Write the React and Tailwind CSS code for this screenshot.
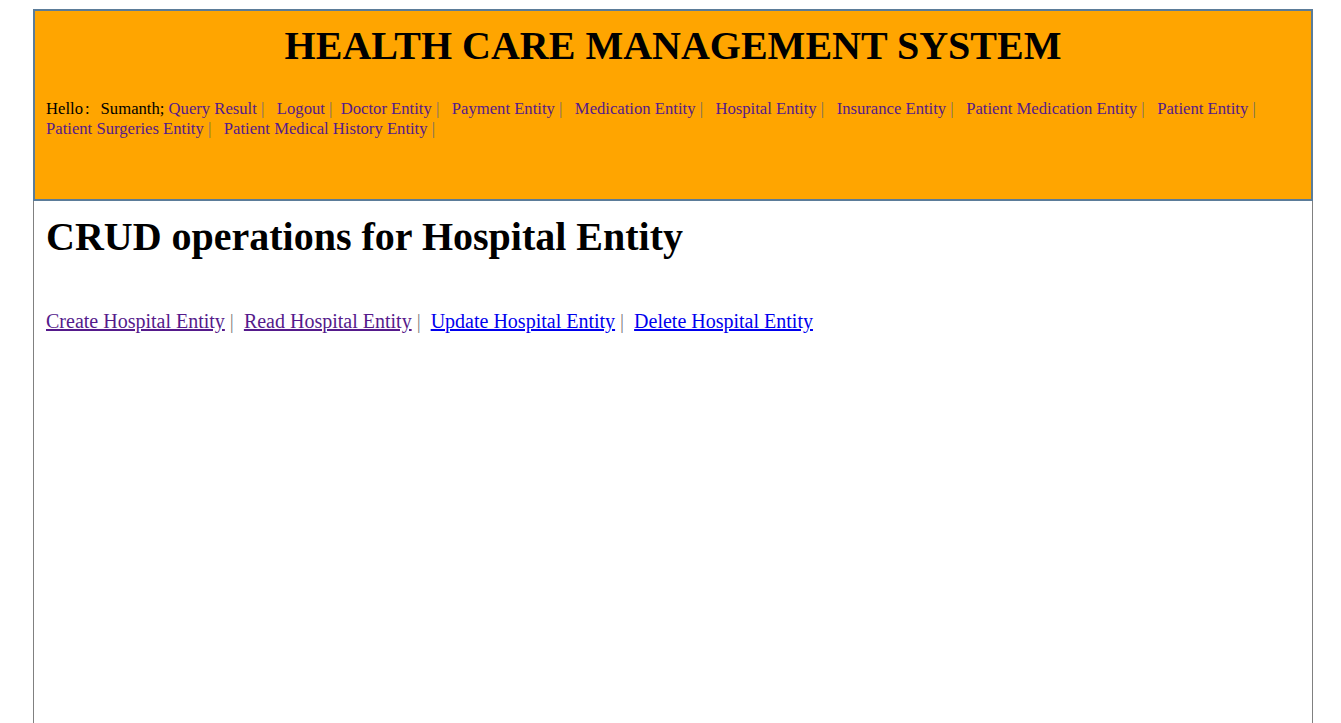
import React from 'react';

const navLinks = [
    { label: 'Query Result', gap: '\u00a0\u00a0 ' },
    { label: 'Logout', gap: '\u00a0 ' },
    { label: 'Doctor Entity', gap: '\u00a0\u00a0 ' },
    { label: 'Payment Entity', gap: '\u00a0\u00a0 ' },
    { label: 'Medication Entity', gap: '\u00a0\u00a0 ' },
    { label: 'Hospital Entity', gap: '\u00a0\u00a0 ' },
    { label: 'Insurance Entity', gap: '\u00a0\u00a0 ' },
    { label: 'Patient Medication Entity', gap: '\u00a0\u00a0 ' },
    { label: 'Patient Entity', gap: '\u00a0\u00a0 ' },
    { label: 'Patient Surgeries Entity', gap: '\u00a0\u00a0 ' },
    { label: 'Patient Medical History Entity', gap: '' },
];

const crudLinks = [
    { label: 'Create Hospital Entity', visited: true },
    { label: 'Read Hospital Entity', visited: true },
    { label: 'Update Hospital Entity', visited: false },
    { label: 'Delete Hospital Entity', visited: false },
];

const App = () => (
    <div className="min-h-screen bg-white pt-[9px] font-['Liberation_Serif','Times_New_Roman',serif] text-black">
        <div className="ml-[33px] w-[1280px] min-h-[714px] border-x border-[#808080]">
            <div className="-mx-px h-[192px] border-2 border-[#5b7c99] bg-[#ffa500] px-[11px]">
                <h1 className="mt-[12px] text-center text-[40px] font-bold leading-[46px]">
                    HEALTH CARE MANAGEMENT SYSTEM
                </h1>
                <div className="mt-[30px] text-[16.65px] leading-5">
                    Hello<span className="ml-[2px] mr-[11px]">:</span>Sumanth;{' '}
                    {navLinks.map((link) => (
                        <React.Fragment key={link.label}>
                            <a href="#" className="text-[#551a8b]">{link.label}</a>
                            <span className="text-[#6e6e6e]"> |</span>
                            {link.gap}
                        </React.Fragment>
                    ))}
                </div>
            </div>
            <div className="px-[12px]">
                <h1 className="mt-[13px] text-[40px] font-bold leading-[46px]">
                    CRUD operations for Hospital Entity
                </h1>
                <div className="mt-[50px] text-[20px] leading-[23px]">
                    {crudLinks.map((link, index) => (
                        <React.Fragment key={link.label}>
                            <a
                                href="#"
                                className={`underline ${link.visited ? 'text-[#551a8b]' : 'text-[#0000ee]'}`}
                            >
                                {link.label}
                            </a>
                            {index < crudLinks.length - 1 && (
                                <>
                                    <span className="text-[#808080]"> |</span>
                                    {'\u00a0 '}
                                </>
                            )}
                        </React.Fragment>
                    ))}
                </div>
            </div>
        </div>
    </div>
);

export default App;
